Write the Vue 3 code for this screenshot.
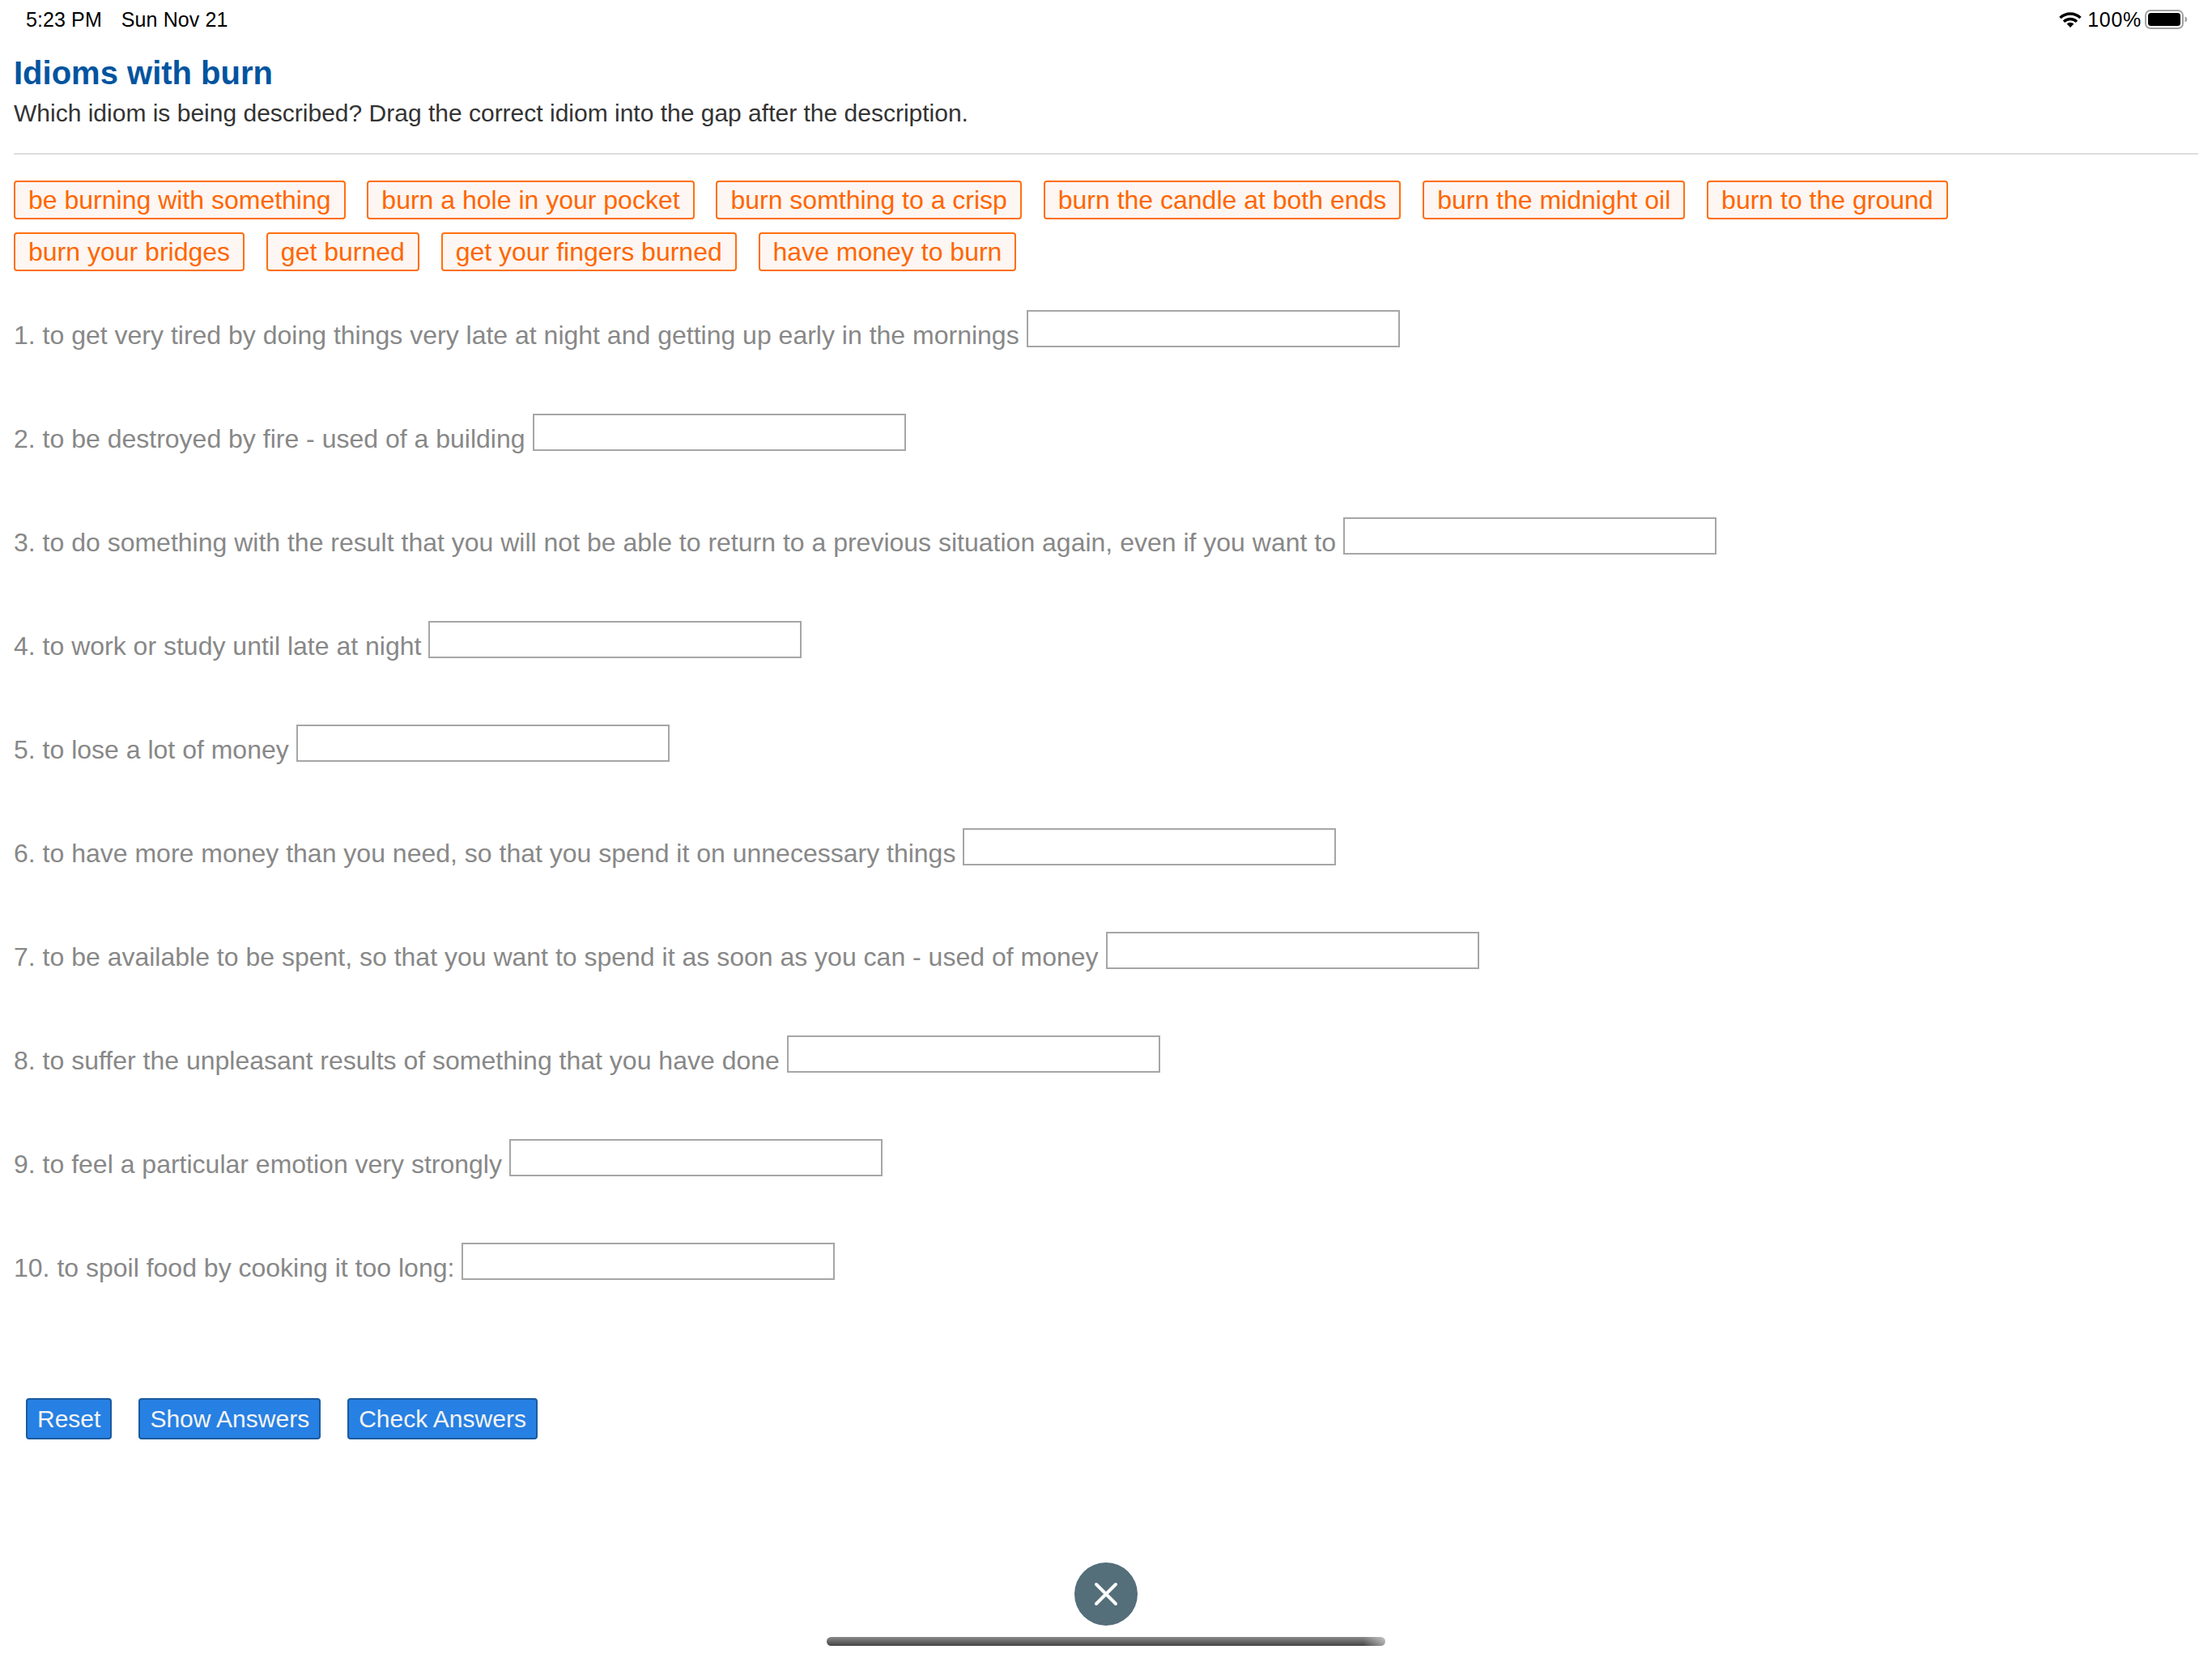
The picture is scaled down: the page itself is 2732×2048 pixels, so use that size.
<script setup>
const tags = [
  "be burning with something",
  "burn a hole in your pocket",
  "burn somthing to a crisp",
  "burn the candle at both ends",
  "burn the midnight oil",
  "burn to the ground",
  "burn your bridges",
  "get burned",
  "get your fingers burned",
  "have money to burn",
];

const questions = [
  "1. to get very tired by doing things very late at night and getting up early in the mornings",
  "2. to be destroyed by fire - used of a building",
  "3. to do something with the result that you will not be able to return to a previous situation again, even if you want to",
  "4. to work or study until late at night",
  "5. to lose a lot of money",
  "6. to have more money than you need, so that you spend it on unnecessary things",
  "7. to be available to be spent, so that you want to spend it as soon as you can - used of money",
  "8. to suffer the unpleasant results of something that you have done",
  "9. to feel a particular emotion very strongly",
  "10. to spoil food by cooking it too long:",
];

const buttons = ["Reset", "Show Answers", "Check Answers"];
</script>

<template>
  <div class="screen">
    <header class="status">
      <div class="status-left">
        <span>5:23 PM</span>
        <span>Sun Nov 21</span>
      </div>
      <div class="status-right">
        <svg class="wifi" width="28" height="20" viewBox="0 0 28 20">
          <path d="M1.500 8A18 18 0 0 1 26.500 8M6 12.700A11.500 11.500 0 0 1 22 12.700" fill="none" stroke="#000" stroke-width="3.400" />
          <path d="M14 20L9.600 15.600A6.300 6.300 0 0 1 18.400 15.600Z" fill="#000" />
        </svg>
        <span class="pct">100%</span>
        <svg class="battery" width="54" height="24" viewBox="0 0 54 24">
          <rect x="1" y="1" width="46" height="22" rx="6" fill="none" stroke="#a3a3a3" stroke-width="2" />
          <rect x="4" y="4" width="40" height="16" rx="3.500" fill="#000" />
          <path d="M49.500 8.500c1.700 .5 2.800 1.800 2.800 3.500s-1.100 3 -2.800 3.500z" fill="#a3a3a3" />
        </svg>
      </div>
    </header>

    <main class="content">
      <h1 class="title">Idioms with burn</h1>
      <p class="intro">Which idiom is being described? Drag the correct idiom into the gap after the description.</p>
      <hr class="rule" />

      <div class="tags">
        <span v-for="tag in tags" :key="tag" class="tag">{{ tag }}</span>
      </div>

      <div class="questions">
        <div v-for="q in questions" :key="q" class="question">
          <span class="q-text">{{ q }}</span>
          <span class="gap"></span>
        </div>
      </div>

      <div class="actions">
        <button v-for="b in buttons" :key="b" class="btn" type="button">{{ b }}</button>
      </div>
    </main>

    <button class="close" type="button" aria-label="Close">
      <svg width="30" height="30" viewBox="0 0 30 30">
        <path d="M3 3L27 27M27 3L3 27" stroke="#fff" stroke-width="4" stroke-linecap="round" fill="none" />
      </svg>
    </button>
    <div class="home-bar"></div>
  </div>
</template>

<style>
html,
body {
  margin: 0;
  background: #fff;
}
</style>

<style scoped>
.screen {
  position: relative;
  width: 2732px;
  height: 2048px;
  overflow: hidden;
  background: #fff;
  font-family: "Liberation Sans", Arial, sans-serif;
}
.status {
  display: flex;
  justify-content: space-between;
  align-items: center;
  height: 48px;
  padding: 0 29px 0 32px;
  font-size: 25px;
  color: #000;
}
.status-left {
  display: flex;
  gap: 24px;
  letter-spacing: 0.1px;
}
.status-right {
  display: flex;
  align-items: center;
  gap: 7px;
}
.pct {
  letter-spacing: 0.7px;
}
.battery {
  margin-left: -3px;
}
.content {
  padding: 0 17px;
}
.title {
  margin: 17px 0 0;
  font-size: 40px;
  line-height: 50px;
  font-weight: 700;
  color: #03549f;
}
.intro {
  margin: 5px 0 0;
  font-size: 30px;
  line-height: 40px;
  color: #333;
}
.rule {
  margin: 29px 0 0;
  height: 2px;
  border: 0;
  background: #ddd;
}
.tags {
  display: flex;
  flex-wrap: wrap;
  gap: 16px 26.8px;
  margin-top: 32px;
}
.tag {
  box-sizing: border-box;
  height: 48px;
  padding: 0 16px;
  border: 2px solid #ff6f0f;
  border-radius: 4px;
  background: #fdf6f2;
  color: #ff6600;
  font-size: 32px;
  line-height: 44px;
}
.questions {
  margin-top: 48px;
}
.question {
  display: flex;
  align-items: flex-start;
  gap: 9px;
  height: 128px;
}
.q-text {
  margin-top: 8px;
  font-size: 32px;
  line-height: 46px;
  color: #888;
}
.gap {
  box-sizing: border-box;
  width: 461px;
  height: 46px;
  border: 2px solid #a6a6a6;
}
.actions {
  display: flex;
  gap: 33px;
  margin: 64px 0 0 15px;
}
.btn {
  box-sizing: border-box;
  height: 51px;
  padding: 0 12px;
  border: 2px solid #1a5a9e;
  border-radius: 4px;
  background: #2780e3;
  color: #f4f4f4;
  font-family: inherit;
  font-size: 30px;
  line-height: 46px;
}
.close {
  position: absolute;
  left: 1327px;
  top: 1930px;
  width: 78px;
  height: 78px;
  display: flex;
  align-items: center;
  justify-content: center;
  padding: 0;
  border: 0;
  border-radius: 50%;
  background: #546e7a;
}
.home-bar {
  position: absolute;
  left: 1021px;
  top: 2022px;
  width: 690px;
  height: 11px;
  border-radius: 6px;
  background: linear-gradient(90deg, transparent 96%, rgba(255, 255, 255, 0.5) 100%), linear-gradient(180deg, #8a8a8a, #444);
}
</style>
